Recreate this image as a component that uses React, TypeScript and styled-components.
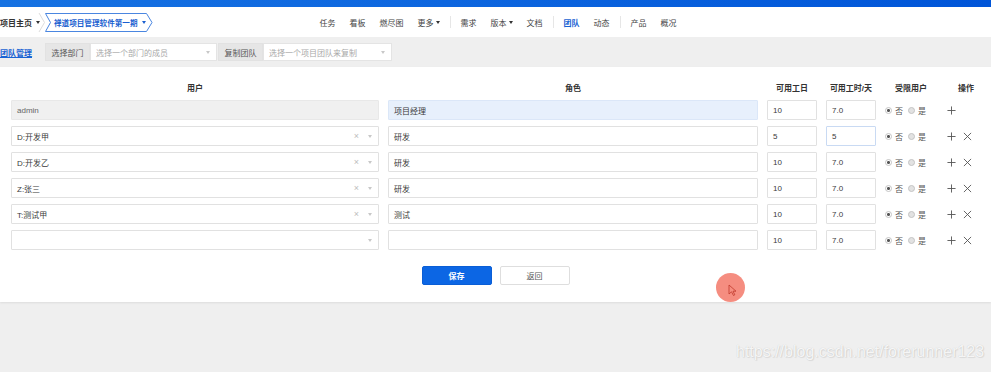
import React from "react";
import styled, { createGlobalStyle } from "styled-components";

const GlobalStyle = createGlobalStyle`
  html, body {
    margin: 0;
    padding: 0;
    background: #efefef;
    font-family: "Liberation Sans", "Noto Sans CJK SC", sans-serif;
    font-size: 8px;
    color: #333;
  }
  #root {
    min-height: 100vh;
  }
  * {
    box-sizing: border-box;
  }
`;

const members = [
  { user: "admin", role: "项目经理", days: "10", hours: "7.0", locked: true },
  { user: "D:开发甲", role: "研发", days: "5", hours: "5" },
  { user: "D:开发乙", role: "研发", days: "10", hours: "7.0" },
  { user: "Z:张三", role: "研发", days: "10", hours: "7.0" },
  { user: "T:测试甲", role: "测试", days: "10", hours: "7.0" },
  { user: "", role: "", days: "10", hours: "7.0" },
];

function App() {
  return (
    <Page>
      <GlobalStyle />
      <TopStripe />
      <Header>
        <Breadcrumbs>
          <Crumb>
            <CrumbShape viewBox="0 0 45 19" preserveAspectRatio="none">
              <polyline points="39,0 44.5,9.5 39,19" fill="none" stroke="#dcdcdc" strokeWidth="1" />
            </CrumbShape>
            <CrumbText>项目主页</CrumbText>
            <Caret />
          </Crumb>
          <Crumb $active>
            <CrumbShape viewBox="0 0 108 19" preserveAspectRatio="none">
              <polygon
                points="0.5,0.5 101.5,0.5 107,9.5 101.5,18.5 0.5,18.5 5.5,9.5"
                fill="#fff"
                stroke="#4a86e0"
                strokeWidth="1"
              />
            </CrumbShape>
            <CrumbText $active>禅道项目管理软件第一期</CrumbText>
            <Caret $color="#1a5fd0" />
          </Crumb>
        </Breadcrumbs>
        <Nav>
          <NavItem>任务</NavItem>
          <NavItem>看板</NavItem>
          <NavItem>燃尽图</NavItem>
          <NavItem>
            更多
            <Caret />
          </NavItem>
          <NavDivider />
          <NavItem>需求</NavItem>
          <NavItem>
            版本
            <Caret />
          </NavItem>
          <NavItem>文档</NavItem>
          <NavDivider />
          <NavItem $active>团队</NavItem>
          <NavItem>动态</NavItem>
          <NavDivider />
          <NavItem>产品</NavItem>
          <NavItem>概况</NavItem>
        </Nav>
        <div />
      </Header>

      <SubNav>
        <SubTitle>团队管理</SubTitle>
        <FieldGroup>
          <FieldLabel>选择部门</FieldLabel>
          <PickBox $width={127}>
            <Placeholder>选择一个部门的成员</Placeholder>
            <Caret $color="#c8c8c8" />
          </PickBox>
          <FieldLabel>复制团队</FieldLabel>
          <PickBox $width={129}>
            <Placeholder>选择一个项目团队来复制</Placeholder>
            <Caret $color="#c8c8c8" />
          </PickBox>
        </FieldGroup>
      </SubNav>

      <Panel>
        <TeamGrid>
          <HeadCell>用户</HeadCell>
          <HeadCell>角色</HeadCell>
          <HeadCell>可用工日</HeadCell>
          <HeadCell>可用工时/天</HeadCell>
          <HeadCell>受限用户</HeadCell>
          <HeadCell>操作</HeadCell>

          {members.map((m, i) => (
            <React.Fragment key={i}>
              {m.locked ? (
                <Field $disabled>{m.user}</Field>
              ) : (
                <UserSelect>
                  <span>{m.user}</span>
                  <SelectTools>
                    {m.user && <ClearMark>×</ClearMark>}
                    <Caret $color="#c8c8c8" />
                  </SelectTools>
                </UserSelect>
              )}
              <Field $highlight={i === 0}>{m.role}</Field>
              <Field>{m.days}</Field>
              <Field $focus={i === 1}>{m.hours}</Field>
              <RadioGroup>
                <Radio $checked />
                <RadioLabel>否</RadioLabel>
                <Radio />
                <RadioLabel>是</RadioLabel>
              </RadioGroup>
              <Ops>
                <OpIcon viewBox="0 0 10 10">
                  <path d="M5 0.5V9.5M0.5 5H9.5" stroke="#555" strokeWidth="1" fill="none" />
                </OpIcon>
                {i > 0 && (
                  <OpIcon viewBox="0 0 10 10">
                    <path d="M1 1L9 9M9 1L1 9" stroke="#555" strokeWidth="1" fill="none" />
                  </OpIcon>
                )}
              </Ops>
            </React.Fragment>
          ))}
        </TeamGrid>

        <Actions>
          <Button $primary>保存</Button>
          <Button>返回</Button>
        </Actions>
      </Panel>

      <ClickMarker>
        <svg width="9" height="12" viewBox="0 0 9 12">
          <path d="M1 1V10L3.5 7.8L5.5 11.5L6.8 10.8L5 7.2H8Z" fill="none" stroke="#c0392b" strokeWidth="0.8" />
        </svg>
      </ClickMarker>
      <Watermark>https://blog.csdn.net/forerunner123</Watermark>
    </Page>
  );
}

const Page = styled.div`
  position: relative;
  min-height: 100vh;
  background: #efefef;
  overflow: hidden;
`;

const TopStripe = styled.div`
  height: 7px;
  background: linear-gradient(90deg, #1672e2 0%, #0d66df 45%, #0055d8 100%);
`;

const Header = styled.header`
  height: 30px;
  background: #fff;
  display: grid;
  grid-template-columns: 1fr auto 1fr;
  align-items: center;
`;

const Breadcrumbs = styled.div`
  display: flex;
  align-items: center;
  height: 19px;
`;

const Crumb = styled.div<{ $active?: boolean }>`
  position: relative;
  display: flex;
  align-items: center;
  height: 19px;
  width: ${(p) => (p.$active ? "108px" : "45px")};
  padding-left: ${(p) => (p.$active ? "9px" : "0")};
  gap: 2px;
`;

const CrumbShape = styled.svg`
  position: absolute;
  inset: 0;
  width: 100%;
  height: 100%;
  z-index: 0;
`;

const CrumbText = styled.span<{ $active?: boolean }>`
  position: relative;
  font-size: ${(p) => (p.$active ? "7.6px" : "8px")};
  font-weight: bold;
  white-space: nowrap;
  color: ${(p) => (p.$active ? "#1a5fd0" : "#333")};
`;

const Caret = styled.span<{ $color?: string }>`
  position: relative;
  display: inline-block;
  flex-shrink: 0;
  width: 0;
  height: 0;
  margin-left: 2px;
  border-left: 2.5px solid transparent;
  border-right: 2.5px solid transparent;
  border-top: 3px solid ${(p) => p.$color || "#333"};
`;

const Nav = styled.nav`
  display: flex;
  align-items: center;
  margin-left: 5px;
`;

const NavItem = styled.span<{ $active?: boolean }>`
  display: flex;
  align-items: center;
  padding: 0 7px;
  font-size: 8px;
  color: ${(p) => (p.$active ? "#1a63d3" : "#444")};
  font-weight: ${(p) => (p.$active ? "bold" : "normal")};
`;

const NavDivider = styled.span`
  width: 1px;
  height: 12px;
  margin: 0 3px;
  background: #e6e6e6;
`;

const SubNav = styled.div`
  height: 30px;
  display: flex;
  align-items: center;
  background: #efefef;
  gap: 13px;
`;

const SubTitle = styled.span`
  display: flex;
  align-items: center;
  height: 30px;
  padding-top: 1px;
  font-size: 8px;
  font-weight: bold;
  color: #1a63d3;
  position: relative;

  &::after {
    content: "";
    position: absolute;
    left: 0;
    right: 0;
    bottom: 9px;
    height: 1.5px;
    background: #1a63d3;
  }
`;

const FieldGroup = styled.div`
  display: flex;
  align-items: center;
  height: 18px;
`;

const FieldLabel = styled.span`
  height: 18px;
  width: 45px;
  display: flex;
  align-items: center;
  justify-content: center;
  background: #e6e6e6;
  border: 1px solid #e2e2e2;
  color: #555;
  font-size: 8px;
`;

const PickBox = styled.div<{ $width: number }>`
  width: ${(p) => p.$width}px;
  height: 18px;
  display: flex;
  align-items: center;
  justify-content: space-between;
  padding: 0 6px 0 5px;
  background: #fff;
  border: 1px solid #e4e4e4;
  margin-right: 1px;
`;

const Placeholder = styled.span`
  color: #a8a8a8;
  font-size: 8px;
`;

const Panel = styled.section`
  background: #fff;
  padding: 13px 0 17px 11px;
  box-shadow: 0 1px 2px rgba(0, 0, 0, 0.08);
`;

const TeamGrid = styled.div`
  display: grid;
  grid-template-columns: 368px 370px 50px 50px 52px 40px;
  grid-template-rows: 14px;
  grid-auto-rows: 20px;
  column-gap: 9px;
  row-gap: 6px;
`;

const HeadCell = styled.div`
  display: flex;
  align-items: center;
  justify-content: center;
  font-size: 8px;
  font-weight: bold;
  color: #333;
`;

const Field = styled.div<{ $disabled?: boolean; $highlight?: boolean; $focus?: boolean }>`
  display: flex;
  align-items: center;
  padding: 0 5px;
  height: 20px;
  font-size: 8px;
  color: ${(p) => (p.$disabled ? "#666" : "#3a3a3a")};
  background: ${(p) => (p.$disabled ? "#f0f0f0" : p.$highlight ? "#e7f0fc" : "#fff")};
  border: 1px solid
    ${(p) => (p.$disabled ? "#e8e8e8" : p.$highlight ? "#dbe7f8" : p.$focus ? "#c9daf3" : "#e1e1e1")};
  border-radius: 1px;
`;

const UserSelect = styled(Field)`
  justify-content: space-between;
  padding-right: 6px;
`;

const SelectTools = styled.span`
  display: flex;
  align-items: center;
  gap: 7px;
`;

const ClearMark = styled.span`
  color: #bdbdbd;
  font-size: 9px;
  line-height: 1;
`;

const RadioGroup = styled.div`
  display: flex;
  align-items: center;
`;

const Radio = styled.span<{ $checked?: boolean }>`
  width: 7px;
  height: 7px;
  border-radius: 50%;
  border: 1px solid #c4c4c4;
  background: ${(p) =>
    p.$checked ? "radial-gradient(circle, #555 0 1.3px, #fff 1.6px)" : "#e2e2e2"};
  margin-right: 3px;
`;

const RadioLabel = styled.span`
  font-size: 8px;
  color: #555;
  margin-right: 5px;
`;

const Ops = styled.div`
  display: flex;
  align-items: center;
  gap: 7px;
  padding-left: 1px;
`;

const OpIcon = styled.svg`
  width: 9px;
  height: 9px;
`;

const Actions = styled.div`
  display: flex;
  justify-content: center;
  gap: 8px;
  margin-top: 16px;
  padding-right: 11px;
`;

const Button = styled.button<{ $primary?: boolean }>`
  width: 70px;
  height: 19px;
  padding: 0;
  border-radius: 2px;
  font-family: inherit;
  font-size: 8px;
  font-weight: ${(p) => (p.$primary ? "bold" : "normal")};
  color: ${(p) => (p.$primary ? "#fff" : "#555")};
  background: ${(p) => (p.$primary ? "#0c66e4" : "#fff")};
  border: 1px solid ${(p) => (p.$primary ? "#0a5ed6" : "#dedede")};
`;

const ClickMarker = styled.div`
  position: absolute;
  left: 716px;
  top: 273px;
  width: 29px;
  height: 29px;
  border-radius: 50%;
  background: rgba(240, 80, 60, 0.65);
  display: flex;
  align-items: center;
  justify-content: center;
  padding: 4px 0 0 3px;
`;

const Watermark = styled.div`
  position: absolute;
  left: 736px;
  top: 343px;
  font-family: "Liberation Sans", sans-serif;
  font-size: 16px;
  color: rgba(255, 255, 255, 0.85);
  text-shadow: 0 0 1px rgba(0, 0, 0, 0.18), 1px 1px 1px rgba(0, 0, 0, 0.08);
  white-space: nowrap;
`;

export default App;
